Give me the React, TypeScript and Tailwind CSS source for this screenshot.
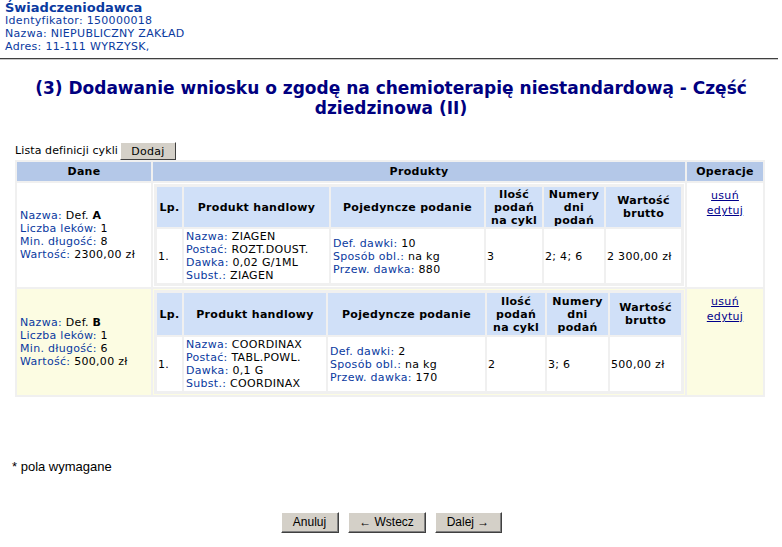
const label = "text-[#0a3aa0]";

function Field({ name, children }: { name: string; children: React.ReactNode }) {
  return (
    <div>
      <span className={label}>{name}:</span> {children}
    </div>
  );
}

type Row = {
  def: string;
  leki: number;
  dl: number;
  wartosc: string;
  yellow: boolean;
  cols: number[];
  headH: string;
  nazwa: string;
  postac: string;
  dawka: string;
  subst: string;
  defDawki: number;
  przew: number;
  ilosc: number;
  dni: string;
  brutto: string;
};

const rows: Row[] = [
  {
    def: "A",
    leki: 1,
    dl: 8,
    wartosc: "2300,00 zł",
    yellow: false,
    cols: [25, 145, 153, 56, 60, 75],
    headH: "h-[40px]",
    nazwa: "ZIAGEN",
    postac: "ROZT.DOUST.",
    dawka: "0,02 G/1ML",
    subst: "ZIAGEN",
    defDawki: 10,
    przew: 880,
    ilosc: 3,
    dni: "2; 4; 6",
    brutto: "2 300,00 zł",
  },
  {
    def: "B",
    leki: 1,
    dl: 6,
    wartosc: "500,00 zł",
    yellow: true,
    cols: [25, 142, 157, 58, 61, 71],
    headH: "h-[42px]",
    nazwa: "COORDINAX",
    postac: "TABL.POWL.",
    dawka: "0,1 G",
    subst: "COORDINAX",
    defDawki: 2,
    przew: 170,
    ilosc: 2,
    dni: "3; 6",
    brutto: "500,00 zł",
  },
];

function Button({ children, w }: { children: React.ReactNode; w: string }) {
  return (
    <button
      className={`${w} h-[21px] bg-[#d4d0c8] border border-t-white border-l-white border-r-[#404040] border-b-[#404040] shadow-[inset_-1px_-1px_0_#808080] font-['Liberation_Sans'] text-[12px] text-black`}
    >
      {children}
    </button>
  );
}

export default function App() {
  return (
    <div className="w-[782px] h-[547px] overflow-hidden bg-white font-['DejaVu_Sans',sans-serif] text-[11px] leading-[13px] tracking-[0.3px] text-black">
      <div className="pl-[5px] pt-[1px] text-[#0a3aa0]">
        <div className="font-bold text-[13px] leading-[13px] tracking-normal">Świadczeniodawca</div>
        <div>Identyfikator: 150000018</div>
        <div>Nazwa: NIEPUBLICZNY ZAKŁAD</div>
        <div>Adres: 11-111 WYRZYSK,</div>
      </div>
      <div className="mt-[5px] w-[778px] h-[2px] border-t border-t-[#404040] border-b border-b-[#c8c8c8]" />

      <div className="mt-[18px] text-center font-bold text-[17px] leading-[20px] tracking-normal text-[#000080]">
        (3) Dodawanie wniosku o zgodę na chemioterapię niestandardową - Część
        <br />
        dziedzinowa (II)
      </div>

      <div className="mt-[24px] ml-[15px] flex items-end gap-[2px]">
        <span className="pb-[3px] tracking-[0.1px]">Lista definicji cykli</span>
        <button className="w-[56px] h-[18px] bg-[#d4d0c8] border border-t-white border-l-white border-r-[#404040] border-b-[#404040] text-[11px] leading-[13px]">
          Dodaj
        </button>
      </div>

      <table className="ml-[15px] w-[750px] table-fixed border-separate border-spacing-[2px] bg-[#f0f0f0]">
        <colgroup>
          <col className="w-[134px]" />
          <col className="w-[532px]" />
          <col className="w-[76px]" />
        </colgroup>
        <thead>
          <tr className="bg-[#b4c8e8] h-[19px]">
            <th className="p-0 text-center">Dane</th>
            <th className="p-0 text-center">Produkty</th>
            <th className="p-0 text-center">Operacje</th>
          </tr>
        </thead>
        <tbody>
          {rows.map((r) => (
            <tr key={r.def} className={r.yellow ? "bg-[#fcfce2]" : "bg-white"}>
              <td className="px-[3px] align-middle">
                <div className="whitespace-nowrap">
                  <span className={label}>Nazwa:</span> Def. <b>{r.def}</b>
                </div>
                <Field name="Liczba leków">{r.leki}</Field>
                <Field name="Min. długość">{r.dl}</Field>
                <Field name="Wartość">{r.wartosc}</Field>
              </td>
              <td className="p-[1px]">
                <table className="w-[530px] table-fixed border-separate border-spacing-[2px] border border-[#f0f0f0] bg-[#f0f0f0]">
                  <colgroup>
                    {r.cols.map((c, i) => (
                      <col key={i} style={{ width: c }} />
                    ))}
                  </colgroup>
                  <tbody>
                    <tr className={`bg-[#d0e0f8] ${r.headH}`}>
                      <th className="p-0 text-center">Lp.</th>
                      <th className="p-0 text-center">Produkt handlowy</th>
                      <th className="p-0 text-center">Pojedyncze podanie</th>
                      <th className="p-0 text-center">
                        Ilość
                        <br />
                        podań
                        <br />
                        na cykl
                      </th>
                      <th className="p-0 text-center">
                        Numery
                        <br />
                        dni
                        <br />
                        podań
                      </th>
                      <th className="p-0 text-center">
                        Wartość
                        <br />
                        brutto
                      </th>
                    </tr>
                    <tr className="bg-white h-[54px]">
                      <td className="px-[1px]">1.</td>
                      <td className="px-[2px] whitespace-nowrap">
                        <Field name="Nazwa">{r.nazwa}</Field>
                        <Field name="Postać">{r.postac}</Field>
                        <Field name="Dawka">{r.dawka}</Field>
                        <Field name="Subst.">{r.subst}</Field>
                      </td>
                      <td className="px-[2px] whitespace-nowrap">
                        <Field name="Def. dawki">{r.defDawki}</Field>
                        <Field name="Sposób obl.">na kg</Field>
                        <Field name="Przew. dawka">{r.przew}</Field>
                      </td>
                      <td className="px-[1px]">{r.ilosc}</td>
                      <td className="px-[1px]">{r.dni}</td>
                      <td className="px-[1px] whitespace-nowrap">{r.brutto}</td>
                    </tr>
                  </tbody>
                </table>
              </td>
              <td className="align-top text-center pt-[5px]">
                <div>
                  <a className="text-[#00008b] underline leading-[15px]" href="#">
                    usuń
                  </a>
                </div>
                <div>
                  <a className="text-[#00008b] underline leading-[15px]" href="#">
                    edytuj
                  </a>
                </div>
              </td>
            </tr>
          ))}
        </tbody>
      </table>

      <div className="mt-[62px] ml-[12px] font-['Liberation_Sans'] text-[13px] leading-[15px] tracking-normal">
        * pola wymagane
      </div>

      <div className="mt-[38px] flex justify-center gap-[9px] tracking-normal">
        <Button w="w-[58px]">Anuluj</Button>
        <Button w="w-[78px]">← Wstecz</Button>
        <Button w="w-[67px]">Dalej →</Button>
      </div>
    </div>
  );
}
